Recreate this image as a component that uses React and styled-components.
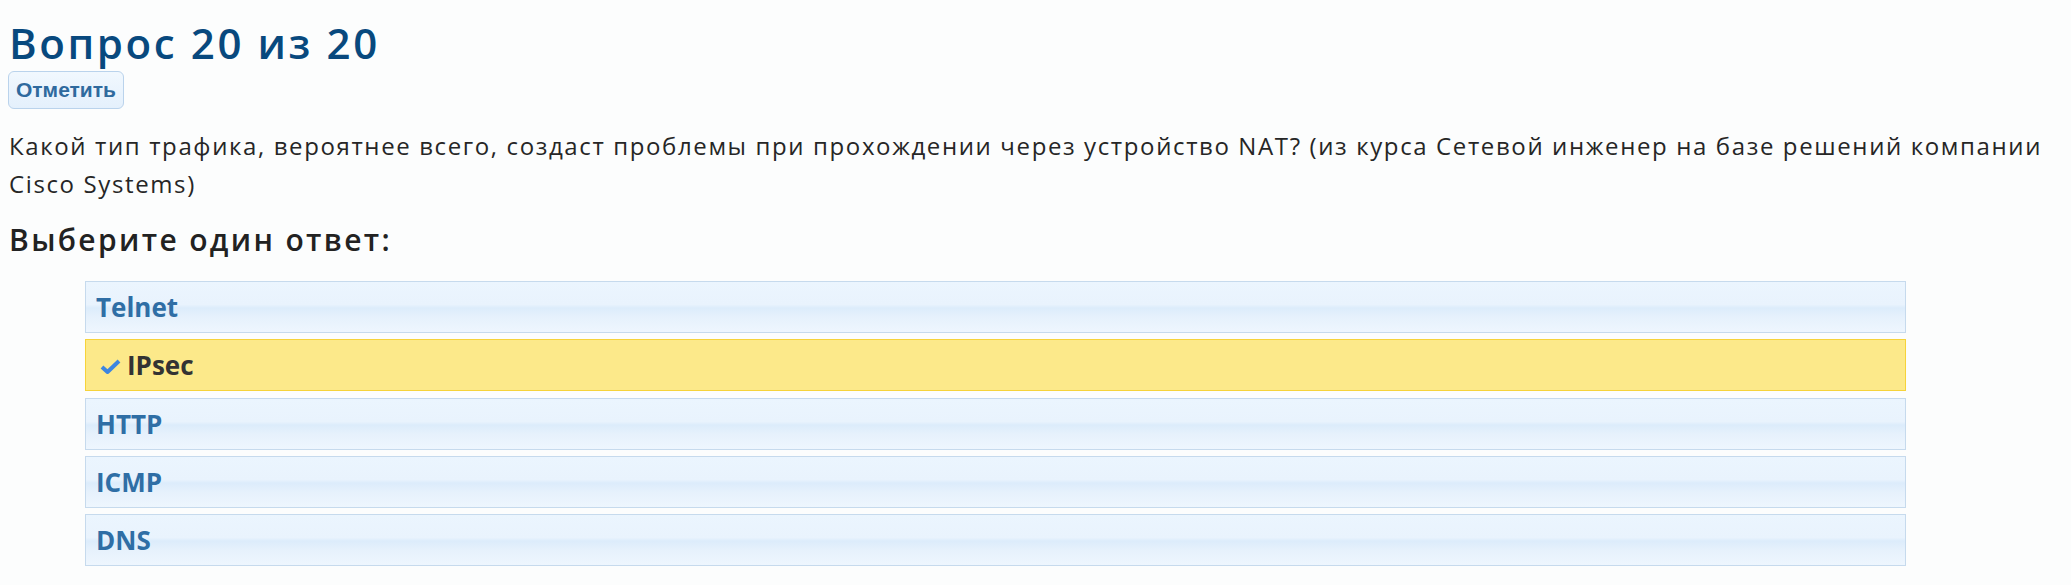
import React from 'react';
import styled, { createGlobalStyle } from 'styled-components';

const GlobalStyle = createGlobalStyle`
  html, body {
    margin: 0;
    padding: 0;
    background: #fcfdfd;
  }
  body {
    font-family: "Open Sans", "Liberation Sans", sans-serif;
    color: #222;
  }
`;

const Page = styled.div`
  padding: 18px 8px 0 8px;
  display: flex;
  flex-direction: column;
  align-items: flex-start;
`;

const Title = styled.h2`
  margin: 0;
  font-size: 42px;
  line-height: 50px;
  font-weight: 600;
  color: #08497e;
  letter-spacing: 2.6px;
  padding-left: 1px;
`;

const MarkButton = styled.button`
  margin-top: 3px;
  height: 38px;
  padding: 0 7px;
  border: 1px solid #bad3ec;
  border-radius: 6px;
  background: linear-gradient(to bottom, #f1f8fe 0%, #e4f0fc 100%);
  font-family: "Liberation Sans", Arial, sans-serif;
  font-weight: 700;
  font-size: 21px;
  color: #2f6a9e;
  cursor: pointer;
`;

const Question = styled.p`
  margin: 18px 0 0 0;
  align-self: stretch;
  font-size: 24px;
  line-height: 38px;
  font-weight: 400;
  letter-spacing: 1.62px;
  color: #262626;
  padding-left: 1px;
`;

const Prompt = styled.h3`
  margin: 19px 0 0 0;
  font-size: 30px;
  line-height: 36px;
  font-weight: 600;
  color: #222;
  letter-spacing: 2.35px;
  padding-left: 1px;
`;

const Answers = styled.div`
  margin: 23px 0 0 77px;
  width: 1821px;
  display: flex;
  flex-direction: column;
  gap: 6.25px;
`;

const Answer = styled.div`
  box-sizing: border-box;
  height: 52px;
  display: flex;
  align-items: center;
  gap: 6px;
  padding-left: ${p => (p.$selected ? '14px' : '10px')};
  border: 1px solid ${p => (p.$selected ? '#f6d33a' : '#c6daed')};
  background: ${p =>
    p.$selected
      ? '#fce98a'
      : 'linear-gradient(to bottom, #ebf5fe 0%, #e9f3fd 45%, #dcecfb 52%, #e6f1fc 70%, #eef6fe 100%)'};
  font-size: 26px;
  font-weight: 700;
  color: ${p => (p.$selected ? '#333' : '#2f6ea5')};
  cursor: pointer;
`;

const Check = styled.svg`
  width: 21px;
  height: 15px;
  margin-top: 2px;
  flex: none;
`;

const answers = [
  { text: 'Telnet' },
  { text: 'IPsec', selected: true },
  { text: 'HTTP' },
  { text: 'ICMP' },
  { text: 'DNS' },
];

export default function App() {
  return (
    <>
      <GlobalStyle />
      <Page>
        <Title>Вопрос 20 из 20</Title>
        <MarkButton>Отметить</MarkButton>
        <Question>
          Какой тип трафика, вероятнее всего, создаст проблемы при прохождении через устройство NAT? (из курса Сетевой инженер на базе решений компании Cisco Systems)
        </Question>
        <Prompt>Выберите один ответ:</Prompt>
        <Answers>
          {answers.map(a => (
            <Answer key={a.text} $selected={a.selected}>
              {a.selected && (
                <Check viewBox="0 0 21 15">
                  <path d="M2 8 L7.5 13 L19 2" fill="none" stroke="#3d86e0" strokeWidth="4" strokeLinejoin="round" />
                </Check>
              )}
              {a.text}
            </Answer>
          ))}
        </Answers>
      </Page>
    </>
  );
}
